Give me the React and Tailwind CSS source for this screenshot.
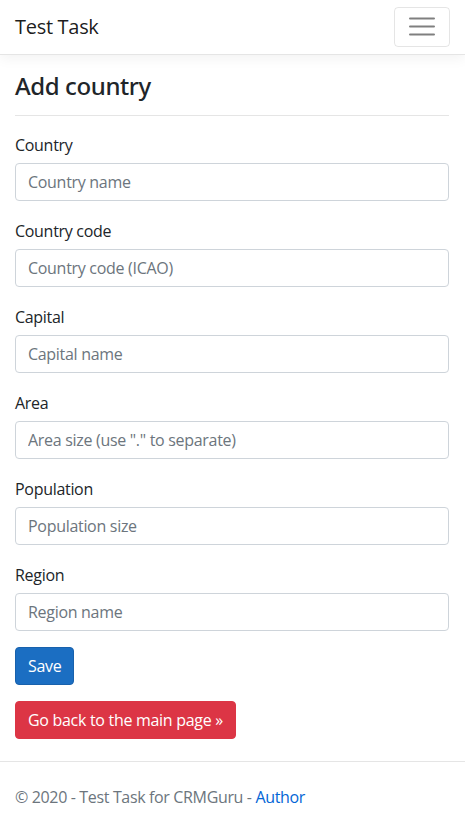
import React from "react";

const fields = [
  { label: "Country", placeholder: "Country name" },
  { label: "Country code", placeholder: "Country code (ICAO)" },
  { label: "Capital", placeholder: "Capital name" },
  { label: "Area", placeholder: 'Area size (use "." to separate)' },
  { label: "Population", placeholder: "Population size" },
  { label: "Region", placeholder: "Region name" },
];

export default function App() {
  return (
    <div
      className="min-h-screen bg-white text-[#212529] text-[16px] tracking-[-0.3px]"
      style={{ fontFamily: '"Open Sans", "Noto Sans", sans-serif' }}
    >
      <nav className="flex items-center justify-between h-[55px] px-[15px] bg-white border-b border-[#e5e5e5] shadow-[0_4px_12px_rgba(0,0,0,0.05)]">
        <a href="#" className="text-[20px] leading-[30px] text-[rgba(0,0,0,0.9)]">
          Test Task
        </a>
        <button
          type="button"
          className="flex items-center justify-center w-[56px] h-[40px] border border-[rgba(0,0,0,0.1)] rounded-[4px] bg-transparent"
        >
          <svg width="30" height="30" viewBox="0 0 30 30">
            <path
              d="M3 6.5h24M3 14.5h24M3 22.5h24"
              stroke="rgba(0,0,0,0.5)"
              strokeWidth="2"
              strokeLinecap="round"
            />
          </svg>
        </button>
      </nav>

      <main className="pl-[15px] pr-[16px]">
        <h4
          className="mt-[17px] text-[24px] leading-[1.2] font-medium tracking-[-0.4px]"
          style={{ fontFamily: '"Noto Sans", "Open Sans", sans-serif' }}
        >
          Add country
        </h4>
        <hr className="mt-[14px] mb-[15px] border-0 border-t border-[rgba(0,0,0,0.1)]" />

        <form>
          {fields.map((f) => (
            <div key={f.label} className="mb-4">
              <label className="block leading-6 pt-[2px] mb-[6px]">{f.label}</label>
              <input
                type="text"
                placeholder={f.placeholder}
                className="block w-full h-[38px] px-[12px] border border-[#ced4da] rounded-[4px] leading-6 text-[#495057] placeholder-[#6c757d] outline-none"
              />
            </div>
          ))}
          <button
            type="button"
            className="h-[38px] px-[12px] rounded-[4px] bg-[#1b6ec2] border border-[#1861ac] text-white leading-6"
          >
            Save
          </button>
        </form>

        <div className="mt-4">
          <a
            href="#"
            className="inline-flex items-center h-[38px] px-[12px] rounded-[4px] bg-[#dc3545] border border-[#dc3545] text-white leading-6"
          >
            Go back to the main page »
          </a>
        </div>
      </main>

      <footer className="mt-[22px] border-t border-[#e5e5e5] px-[15px] pt-[23px] pb-[22px] text-[#6c757d] leading-6 tracking-[-0.35px]">
        © 2020 - Test Task for CRMGuru -{" "}
        <a href="#" className="text-[#0366d6]">
          Author
        </a>
      </footer>
    </div>
  );
}
